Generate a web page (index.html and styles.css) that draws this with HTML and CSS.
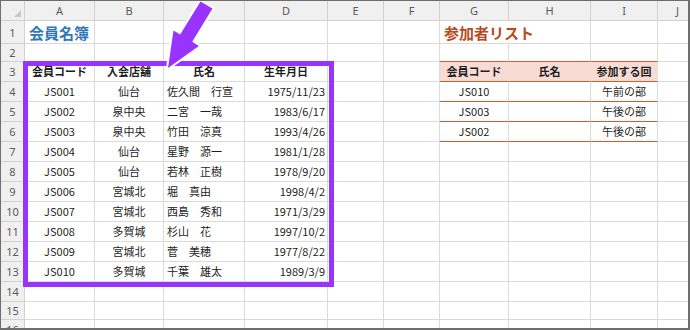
FILE: index.html
```html
<!DOCTYPE html>
<html lang="ja">
<head>
<meta charset="utf-8">
<title>会員名簿</title>
<link rel="stylesheet" href="styles.css">
</head>
<body>
<div class="sheet">
  <div class="grid">
    <div class="ch corner"><span class="tri"></span></div>
    <div class="ch">A</div><div class="ch">B</div><div class="ch">C</div><div class="ch">D</div><div class="ch">E</div><div class="ch">F</div><div class="ch">G</div><div class="ch">H</div><div class="ch">I</div><div class="ch">J</div>

    <div class="rh">1</div>
    <div class="c title blue">会員名簿</div><div class="c"></div><div class="c"></div><div class="c"></div><div class="c"></div><div class="c"></div>
    <div class="c title brown nob">参加者リスト</div><div class="c"></div><div class="c"></div><div class="c"></div>

    <div class="rh">2</div>
    <div class="c"></div><div class="c"></div><div class="c"></div><div class="c"></div><div class="c"></div><div class="c"></div>
    <div class="c ob"></div><div class="c ob"></div><div class="c ob"></div><div class="c"></div>

    <div class="rh">3</div>
    <div class="c ctr b">会員コード</div><div class="c ctr b">入会店舗</div><div class="c ctr b">氏名</div><div class="c ctr b">生年月日</div><div class="c"></div><div class="c"></div>
    <div class="c ctr b pk ob">会員コード</div><div class="c ctr b pk ob">氏名</div><div class="c ctr b pk ob">参加する回</div><div class="c"></div>

    <div class="rh">4</div>
    <div class="c ctr">JS001</div><div class="c ctr">仙台</div><div class="c">佐久間　行宣</div><div class="c rt">1975/11/23</div><div class="c"></div><div class="c"></div>
    <div class="c ctr ob">JS010</div><div class="c ob"></div><div class="c ctr ob">午前の部</div><div class="c"></div>

    <div class="rh">5</div>
    <div class="c ctr">JS002</div><div class="c ctr">泉中央</div><div class="c">二宮　一哉</div><div class="c rt">1983/6/17</div><div class="c"></div><div class="c"></div>
    <div class="c ctr ob">JS003</div><div class="c ob"></div><div class="c ctr ob">午後の部</div><div class="c"></div>

    <div class="rh">6</div>
    <div class="c ctr">JS003</div><div class="c ctr">泉中央</div><div class="c">竹田　涼真</div><div class="c rt">1993/4/26</div><div class="c"></div><div class="c"></div>
    <div class="c ctr ob">JS002</div><div class="c ob"></div><div class="c ctr ob">午後の部</div><div class="c"></div>

    <div class="rh">7</div>
    <div class="c ctr">JS004</div><div class="c ctr">仙台</div><div class="c">星野　源一</div><div class="c rt">1981/1/28</div><div class="c"></div><div class="c"></div>
    <div class="c"></div><div class="c"></div><div class="c"></div><div class="c"></div>

    <div class="rh">8</div>
    <div class="c ctr">JS005</div><div class="c ctr">仙台</div><div class="c">若林　正樹</div><div class="c rt">1978/9/20</div><div class="c"></div><div class="c"></div>
    <div class="c"></div><div class="c"></div><div class="c"></div><div class="c"></div>

    <div class="rh">9</div>
    <div class="c ctr">JS006</div><div class="c ctr">宮城北</div><div class="c">堀　真由</div><div class="c rt">1998/4/2</div><div class="c"></div><div class="c"></div>
    <div class="c"></div><div class="c"></div><div class="c"></div><div class="c"></div>

    <div class="rh">10</div>
    <div class="c ctr">JS007</div><div class="c ctr">宮城北</div><div class="c">西島　秀和</div><div class="c rt">1971/3/29</div><div class="c"></div><div class="c"></div>
    <div class="c"></div><div class="c"></div><div class="c"></div><div class="c"></div>

    <div class="rh">11</div>
    <div class="c ctr">JS008</div><div class="c ctr">多賀城</div><div class="c">杉山　花</div><div class="c rt">1997/10/2</div><div class="c"></div><div class="c"></div>
    <div class="c"></div><div class="c"></div><div class="c"></div><div class="c"></div>

    <div class="rh">12</div>
    <div class="c ctr">JS009</div><div class="c ctr">宮城北</div><div class="c">菅　美穂</div><div class="c rt">1977/8/22</div><div class="c"></div><div class="c"></div>
    <div class="c"></div><div class="c"></div><div class="c"></div><div class="c"></div>

    <div class="rh">13</div>
    <div class="c ctr">JS010</div><div class="c ctr">多賀城</div><div class="c">千葉　雄太</div><div class="c rt">1989/3/9</div><div class="c"></div><div class="c"></div>
    <div class="c"></div><div class="c"></div><div class="c"></div><div class="c"></div>

    <div class="rh">14</div>
    <div class="c"></div><div class="c"></div><div class="c"></div><div class="c"></div><div class="c"></div><div class="c"></div>
    <div class="c"></div><div class="c"></div><div class="c"></div><div class="c"></div>

    <div class="rh">15</div>
    <div class="c"></div><div class="c"></div><div class="c"></div><div class="c"></div><div class="c"></div><div class="c"></div>
    <div class="c"></div><div class="c"></div><div class="c"></div><div class="c"></div>

    <div class="rh">16</div>
    <div class="c"></div><div class="c"></div><div class="c"></div><div class="c"></div><div class="c"></div><div class="c"></div>
    <div class="c"></div><div class="c"></div><div class="c"></div><div class="c"></div>
  </div>

  <div class="highlight"></div>
  <svg class="arrow" width="690" height="330" viewBox="0 0 690 330" xmlns="http://www.w3.org/2000/svg">
    <polygon points="168,68 173.5,30.4 180.2,34.6 200.5,1.4 212.5,8.6 192.2,41.8 198.9,46" fill="#9933ff" stroke="#ffffff" stroke-width="4" stroke-linejoin="miter" paint-order="stroke"/>
  </svg>
</div>
</body>
</html>
```

FILE: styles.css
```css
* { box-sizing: border-box; }
html, body { margin: 0; padding: 0; background: #ffffff; }

.sheet {
  position: relative;
  width: 690px;
  height: 330px;
  overflow: hidden;
  background: #ffffff;
  border-top: 1px solid #6e6e6e;
  border-left: 1px solid #6e6e6e;
  border-right: 2px solid #6e6e6e;
  border-bottom: 2px solid #6e6e6e;
  font-family: "Noto Sans CJK JP", "Noto Sans", sans-serif;
  font-size: 11px;
  color: #1e1e1e;
}

.grid {
  display: grid;
  grid-template-columns: 24px 70px 69px 81px 83px 56px 56px 69px 82px 67px 40px;
  grid-template-rows: 20px 23px 18px repeat(12, 20px) 18px 20px;
}

.ch, .rh {
  background: #f0f0f0;
  color: #5a5a5a;
  font-family: "Noto Sans", sans-serif;
  font-size: 11px;
  display: flex;
  align-items: center;
  justify-content: center;
  border-right: 1px solid #d2d2d2;
  border-bottom: 1px solid #d2d2d2;
}

.corner { position: relative; }
.tri {
  position: absolute;
  right: 3px;
  bottom: 3px;
  width: 0;
  height: 0;
  border-left: 7px solid transparent;
  border-bottom: 7px solid #c9c9c9;
}

.c {
  display: flex;
  align-items: center;
  padding: 0 3px;
  white-space: nowrap;
  border-right: 1px solid #dadada;
  border-bottom: 1px solid #dadada;
  line-height: 1;
}

.ctr { justify-content: center; }
.rt { justify-content: flex-end; padding-right: 2px; }
.b { font-weight: bold; }

.title {
  font-size: 15px;
  font-weight: bold;
  padding-left: 4px;
  overflow: visible;
  position: relative;
  z-index: 1;
}
.blue { color: #2f78b8; }
.brown { color: #b84a1f; }
.nob { border-right-color: transparent; }

.pk { background: #f8dcd4; border-right-color: #f8dcd4; }
.ob { border-bottom-color: #e0552a; }

.highlight {
  position: absolute;
  left: 22px;
  top: 60px;
  width: 311px;
  height: 226px;
  border: 5px solid #9933ff;
  pointer-events: none;
}

.arrow {
  position: absolute;
  left: -1px;
  top: -1px;
  pointer-events: none;
}
```
